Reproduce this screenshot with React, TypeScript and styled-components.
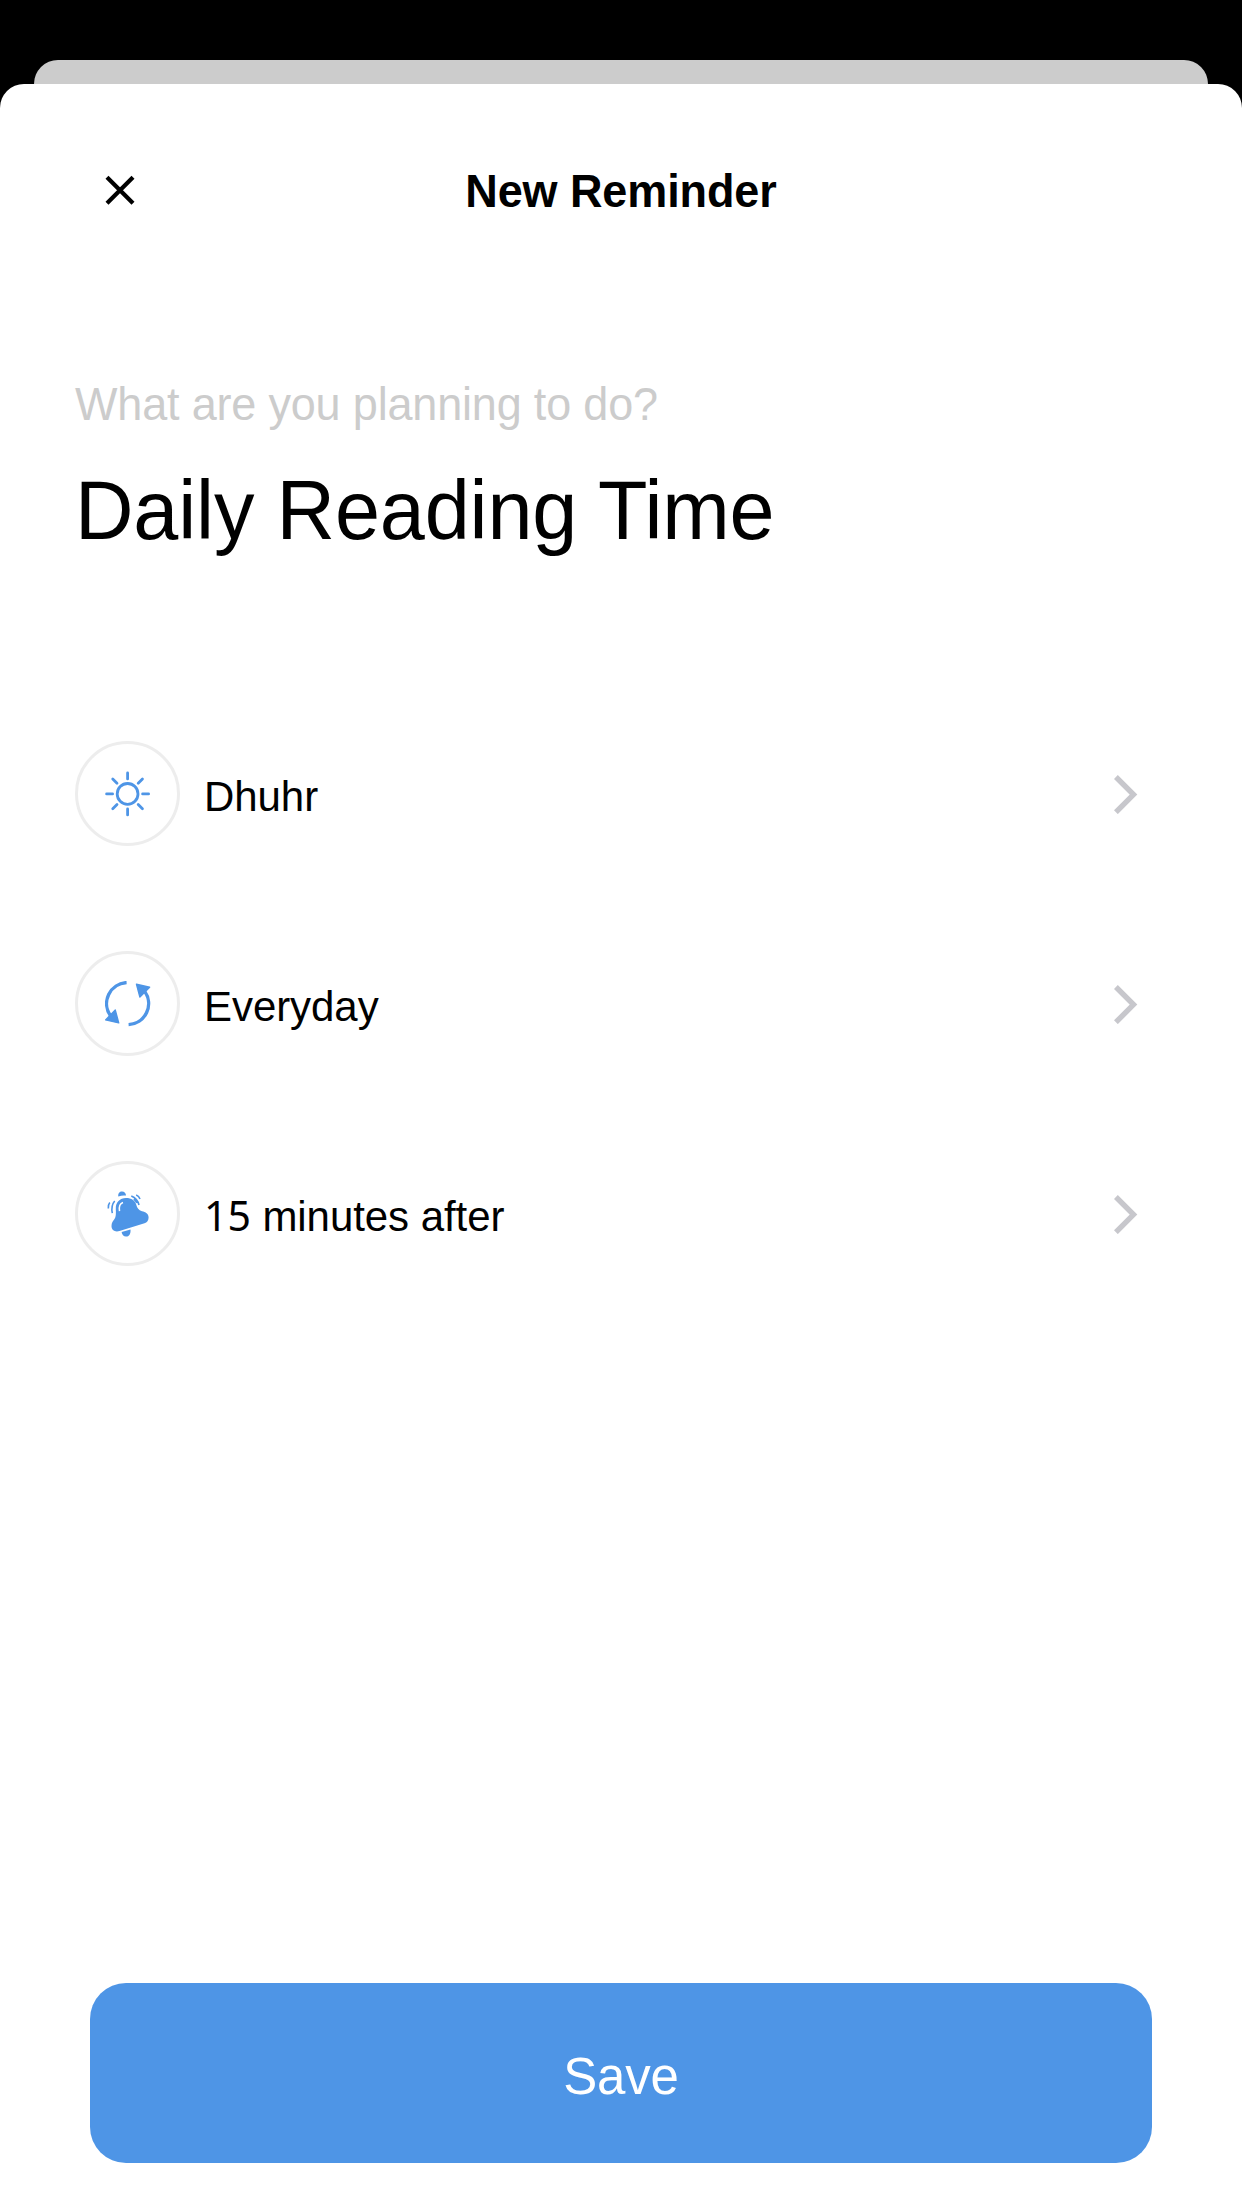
import React from 'react';
import styled, { createGlobalStyle, css } from 'styled-components';

const GlobalStyle = createGlobalStyle`
  *, *::before, *::after { box-sizing: border-box; }
  body { margin: 0; background: #000; }
`;

/* Slightly taller letterforms, stretched upward from the baseline. */
const tallText = css`
  transform: translateY(1px) scaleY(1.025);
  transform-origin: 0 calc(50% + 0.3465em);
`;

const Screen = styled.main`
  display: flex;
  flex-direction: column;
  height: 2208px;
  padding-top: 60px;
  background: #000;
  color: #000;
  font-family: 'Liberation Sans', Arial, sans-serif;
`;

const BackSheet = styled.div`
  flex: none;
  height: 48px;
  margin: 0 34px -24px;
  border-radius: 24px 24px 0 0;
  background: #ccc;
`;

const Sheet = styled.section`
  flex: 1;
  display: flex;
  flex-direction: column;
  padding: 0 75px 45px;
  border-radius: 24px 24px 0 0;
  background: #fff;
  z-index: 1;
`;

const Header = styled.header`
  display: grid;
  grid-template-columns: 90px 1fr 90px;
  align-items: center;
  height: 212px;
`;

const CloseButton = styled.button`
  display: flex;
  justify-content: center;
  padding: 0;
  border: 0;
  background: none;
  color: #000;
`;

const Heading = styled.h1`
  margin: 2px 0 0;
  text-align: center;
  font-size: 45px;
  line-height: 52px;
  letter-spacing: -0.1px;
  ${tallText}
`;

const Question = styled.label`
  margin-top: 82px;
  font-size: 45px;
  line-height: 52px;
  letter-spacing: -0.18px;
  color: #ccc;
  ${tallText}
`;

const Title = styled.h2`
  margin: 34px 0 0;
  font-size: 81px;
  font-weight: 400;
  line-height: 92px;
  letter-spacing: -0.16px;
  ${tallText}
`;

const Options = styled.div`
  display: flex;
  flex-direction: column;
  gap: 105px;
  margin-top: 185px;
`;

const Option = styled.div`
  display: flex;
  align-items: center;
  height: 105px;
  padding-right: 29px;
`;

const IconCircle = styled.span`
  display: grid;
  place-items: center;
  width: 105px;
  height: 105px;
  border: 3px solid #ededed;
  border-radius: 50%;
  color: #4e95e6;
`;

const OptionLabel = styled.span`
  flex: 1;
  margin: 4px 0 0 24px;
  font-size: 42px;
  line-height: 48px;
  letter-spacing: -0.06px;
  ${tallText}
`;

const Digits = styled.span`
  font-family: 'Noto Sans', sans-serif;
  font-size: 41px;
  line-height: 1;
`;

const SaveButton = styled.button`
  height: 180px;
  margin: auto 15px 0;
  padding: 5px 0 0;
  border: 0;
  border-radius: 36px;
  background: #4e95e6;
  color: #fff;
  font: 400 51px/58px 'Liberation Sans', Arial, sans-serif;
`;

const SaveLabel = styled.span`
  display: block;
  letter-spacing: -0.2px;
  ${tallText}
`;

const CloseIcon = () => (
  <svg width="30" height="30" viewBox="0 0 30 30" fill="none" stroke="currentColor" strokeWidth="4.2">
    <path d="M2 2.300 28 28.300M28 2.300 2 28.300" />
  </svg>
);

const SunIcon = () => (
  <svg width="46" height="46" viewBox="-22.6 -22.9 46 46" fill="none" stroke="currentColor" strokeWidth="2.8" strokeLinecap="round">
    <circle r="10.4" />
    {[0, 45, 90, 135, 180, 225, 270, 315].map((angle) => (
      <path key={angle} d="M0-15V-21" transform={`rotate(${angle})`} />
    ))}
  </svg>
);

const RepeatIcon = () => (
  <svg width="46" height="46" viewBox="-22.6 -22.6 46 46">
    {[0, 180].map((angle) => (
      <g key={angle} transform={`rotate(${angle})`}>
        <path d="M1 21A21 21 0 0 0 17-12.300" fill="none" stroke="currentColor" strokeWidth="3.4" />
        <path d="M8.900-19.300 22-16.300 12.300-6.500Z" fill="currentColor" stroke="currentColor" strokeWidth="1.4" strokeLinejoin="round" />
      </g>
    ))}
  </svg>
);

const BellIcon = () => (
  <svg width="46" height="46" viewBox="0 0 46 46">
    <g fill="currentColor">
      <path d="M13.300 5.500C12.800 2.500 14.500 .5 17 .5C19.500 .5 21 2.300 21 4.600C18.500 4.200 16 4.500 13.300 5.500Z" />
      <path d="M10.800 18C10.500 11 15 7 21 7C26.500 7 30 9.500 31.200 13.500C32.200 17 33.500 19.300 37 20.200C40.500 21 43.600 22.500 43.600 26.500C43.600 29.500 42 31.600 39.500 32.200L14.500 40C10 41.500 6.500 39 6.500 35C6.500 31.500 8 30 9.500 28C11 26 11 22.500 10.800 18Z" />
      <path d="M16.600 41 25.500 38.400C26 42.500 24 45.600 21 45.600C18.500 45.600 17 43.700 16.600 41Z" />
    </g>
    <path d="M14.500 20.200C13.800 15.500 14.800 12.500 18 11.500" fill="none" stroke="#fff" strokeWidth="1.5" />
    <path d="M3.300 17.500Q2.800 14 4.800 11.500M7.300 22.200Q5.800 14.500 9.700 10M26.300 5Q32.500 7.500 34 14M28.800 8.200Q31 10 31.800 12M31.200 4Q34 5 35 8" fill="none" stroke="currentColor" strokeWidth="1.6" />
  </svg>
);

const Chevron = () => (
  <svg width="24" height="40" viewBox="0 0 24 40" fill="none" stroke="#c7c7cc" strokeWidth="5.4">
    <path d="M1.900 3 19.500 20.600 1.900 38.200" />
  </svg>
);

const options = [
  { icon: <SunIcon />, label: 'Dhuhr' },
  { icon: <RepeatIcon />, label: 'Everyday' },
  { icon: <BellIcon />, label: <><Digits>15</Digits> minutes after</> },
];

export default function App() {
  return (
    <>
      <GlobalStyle />
      <Screen>
        <BackSheet />
        <Sheet>
          <Header>
            <CloseButton aria-label="Close"><CloseIcon /></CloseButton>
            <Heading>New Reminder</Heading>
          </Header>
          <Question>What are you planning to do?</Question>
          <Title>Daily Reading Time</Title>
          <Options>
            {options.map(({ icon, label }, index) => (
              <Option key={index}>
                <IconCircle>{icon}</IconCircle>
                <OptionLabel>{label}</OptionLabel>
                <Chevron />
              </Option>
            ))}
          </Options>
          <SaveButton><SaveLabel>Save</SaveLabel></SaveButton>
        </Sheet>
      </Screen>
    </>
  );
}
